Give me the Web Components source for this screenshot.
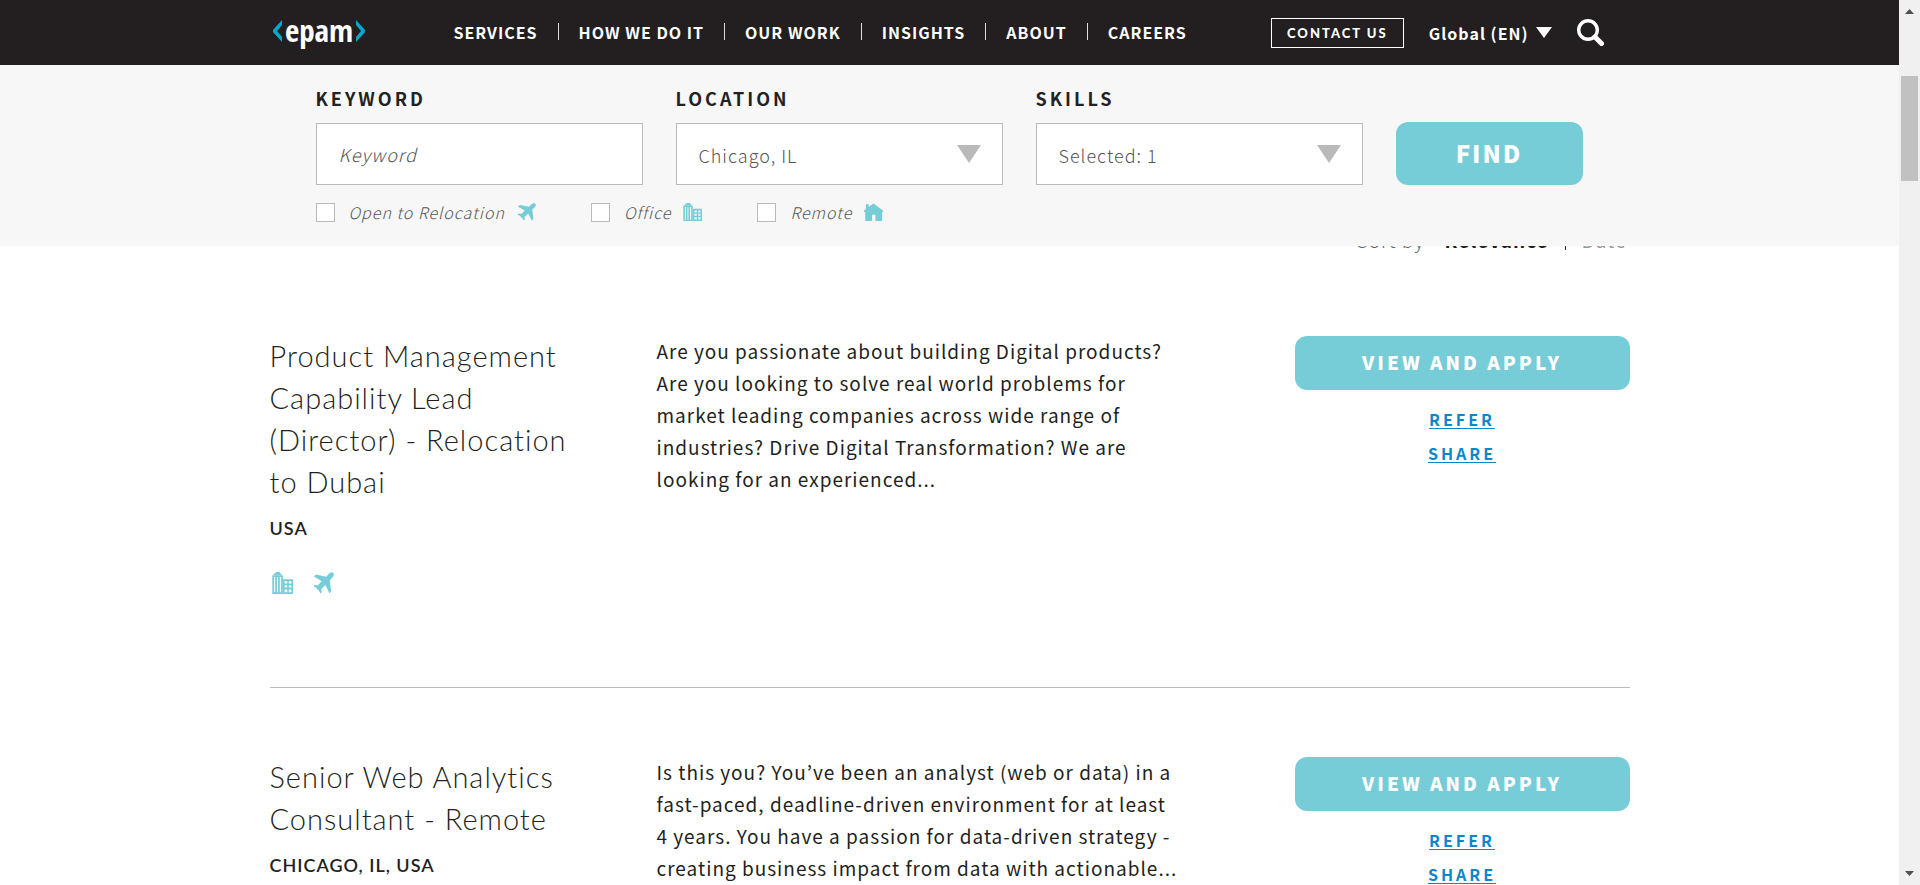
<!DOCTYPE html>
<html lang="en">
<head>
<meta charset="utf-8">
<meta name="viewport" content="width=device-width, initial-scale=1">
<title>EPAM Careers - Job Listings</title>
<style>
  html, body { margin: 0; height: 100%; }
  body {
    --text: "Noto Sans CJK KR", "Noto Sans", sans-serif;
    --display: Lato, "Open Sans", sans-serif;
    --ink: #231f20;
    --teal: #76cdd8;
    --link: #0b86cc;
    --edge: #bbb;
    background: #fff;
    color: #231f20;
    font-family: var(--text);
    overflow: hidden;
  }
</style>
</head>
<body>
<careers-page>
  <site-header slot="header">
    <nav-item href="#services">SERVICES</nav-item>
    <nav-item href="#how">HOW WE DO IT</nav-item>
    <nav-item href="#work">OUR WORK</nav-item>
    <nav-item href="#insights">INSIGHTS</nav-item>
    <nav-item href="#about">ABOUT</nav-item>
    <nav-item href="#careers">CAREERS</nav-item>
  </site-header>
  <job-search slot="search"></job-search>
  <sort-bar></sort-bar>
  <job-card>
    <span slot="title">Product Management Capability Lead (Director) - Relocation to Dubai</span>
    <span slot="place">USA</span>
    <ui-icon slot="modes" name="office" size="large"></ui-icon>
    <ui-icon slot="modes" name="plane" size="large"></ui-icon>
    Are you passionate about building Digital products? Are you looking to solve real world problems for market leading companies across wide range of industries? Drive Digital Transformation? We are looking for an experienced...
  </job-card>
  <job-card>
    <span slot="title">Senior Web Analytics Consultant - Remote</span>
    <span slot="place">CHICAGO, IL, USA</span>
    <ui-icon slot="modes" name="home" size="large"></ui-icon>
    Is this you? You’ve been an analyst (web or data) in a fast-paced, deadline-driven environment for at least 4&nbsp;years. You have a passion for data-driven strategy - creating business impact from data with actionable...
  </job-card>
</careers-page>

<script>
  const define = (name, html, setup) => {
    const template = document.createElement('template');
    template.innerHTML = html;
    customElements.define(name, class extends HTMLElement {
      constructor() {
        super();
        this.attachShadow({ mode: 'open' }).append(template.content.cloneNode(true));
      }
      connectedCallback() { if (setup) setup(this, this.shadowRoot); }
    });
  };

  const icons = {
    plane: '<path d="M19.300.700C18.200-.300 16.700.300 15.700 1.200L12.500 4.300 3.200 2.300.700 3.800 8.200 8.300 4.500 12.200 1.800 11.700.500 12.900 3.800 14.800 4 16.200 5.200 16.300 7.100 19.500 8.300 18.300 7.900 15.500 11.800 11.800 15.700 19.600 17.300 17.200 16 7.600 18.900 4.500C19.900 3.400 20.200 1.600 19.300.700Z"/>',
    office: '<path d="M3.500 0h4v1.300h-4zM1.500 1.300h7.500V3H1.500z"/><path fill-rule="evenodd" d="M.3 3h10v17H.3zM2 4.500V18.500h1V4.500zM4.700 4.500V18.500h1V4.500zM7.400 4.500V18.500h1.200V4.500z"/><path fill-rule="evenodd" d="M10.300 6.500H20V20h-9.700zM12 8.300v2.200h2.500V8.300zM16 8.300v2.200h2.500V8.300zM12 12v2.200h2.500V12zM16 12v2.200h2.500V12zM12 15.800V18.300h2.500V15.800zM16 15.800V18.300h2.500V15.800z"/>',
    home: '<path d="M10 .5 20 8.300V10h-.9V20H12v-7H8.500v7H1.300V10H0V8.300L2 6.700V1.500h3v2.700z"/>'
  };

  define('ui-icon', `
    <style>
      :host { display: block; width: 19px; height: 18px; color: var(--teal); }
      :host([size="large"]) { width: 21px; height: 22px; }
      svg { display: block; width: 100%; height: 100%; fill: currentColor; overflow: visible; }
    </style>
    <svg viewBox="0 0 20 20" preserveAspectRatio="none" aria-hidden="true"></svg>`,
    (host, root) => { root.querySelector('svg').innerHTML = icons[host.getAttribute('name')]; });

  define('careers-page', `
    <style>
      :host { display: grid; grid-template-columns: minmax(0, 1fr) 21px; height: 100vh; }
      .view { display: flex; flex-direction: column; min-height: 0; overflow: hidden; }
      main { flex: 1; min-height: 0; overflow: hidden; }
      .column { max-width: 1360px; margin: 0 auto; }
    </style>
    <div class="view">
      <slot name="header"></slot>
      <slot name="search"></slot>
      <main><div class="column"><slot></slot></div></main>
    </div>
    <page-scroller></page-scroller>`);

  define('page-scroller', `
    <style>
      :host { display: grid; grid-template-rows: 76px 105px 1fr auto; justify-items: center; background: #f0f0f0; }
      svg { display: block; width: 9px; height: 5px; fill: #505050; margin: 9px 0; }
      .thumb { width: 17px; background: #c1c1c1; }
    </style>
    <svg viewBox="0 0 9 5"><path d="M0 5 4.500 0 9 5z"/></svg>
    <div class="thumb"></div>
    <span></span>
    <svg viewBox="0 0 9 5"><path d="M0 0 4.500 5 9 0z"/></svg>`);

  define('nav-item', `
    <style>
      :host { display: flex; align-items: center; }
      :host(:not(:first-child))::before { content: ""; width: 1px; height: 17px; background: #ddd; margin: 0 20px; }
      a { color: #fff; text-decoration: none; font: 700 16px/24px var(--text); letter-spacing: 1px; white-space: nowrap; }
    </style>
    <a><slot></slot></a>`,
    (host, root) => { root.querySelector('a').href = host.getAttribute('href'); });

  define('site-header', `
    <style>
      :host { display: block; flex: none; background: var(--ink); color: #fff; }
      header { display: flex; align-items: center; max-width: 1360px; height: 65px; margin: 0 auto; }
      .logo { display: block; margin-left: 3px; width: 93px; height: 60px; }
      .logo svg { display: block; }
      nav { display: flex; margin-left: 88px; padding-bottom: 2px; }
      .tools { display: flex; align-items: center; margin-left: auto; padding-right: 26px; }
      .contact { box-sizing: border-box; width: 133px; height: 30px; border: 1px solid #fff; color: #fff;
        font: 900 13px/28px var(--display); letter-spacing: 2px; text-align: center; text-decoration: none; white-space: nowrap; }
      button { display: flex; align-items: center; padding: 0; border: 0; background: none; color: #fff; font: 700 16px/24px var(--text); letter-spacing: 1px; white-space: nowrap; }
      .language { margin: 0 25px; gap: 7px; }
      button svg { display: block; }
    </style>
    <header>
      <a class="logo" href="#home" aria-label="epam">
        <svg width="93" height="60" viewBox="0 0 93 60">
          <path d="M9 17v5l-5 6 5 6v5L0 29v-2zM83 17v5l5 6-5 6v5l9-10v-2z" fill="#00a9ce"/>
          <text x="46" y="39" text-anchor="middle" fill="#fff" font-family="'Open Sans Condensed','Roboto Condensed','Liberation Sans Narrow','DejaVu Sans Condensed',sans-serif" font-weight="400" font-size="31">epam</text>
        </svg>
      </a>
      <nav aria-label="Main"><slot></slot></nav>
      <div class="tools">
        <a class="contact" href="#contact">CONTACT US</a>
        <button class="language" type="button">Global (EN)
          <svg width="16" height="11" viewBox="0 0 16 11"><path d="M0 0h16L8 11z" fill="#fff"/></svg>
        </button>
        <button type="button" aria-label="Search">
          <svg width="27" height="27" viewBox="0 0 27 27" fill="none" stroke="#fff"><circle cx="11" cy="11" r="9.300" stroke-width="3.400"/><path d="m18 18 6.500 6.500" stroke-width="5" stroke-linecap="round"/></svg>
        </button>
      </div>
    </header>`);

  define('form-field', `
    <style>
      :host { display: block; }
      label { display: block; margin-bottom: 12px; color: #222; font: 700 18px/26px var(--text); letter-spacing: 3px; }
      .box { display: grid; align-items: center; }
      .box > * { grid-area: 1 / 1; }
      input, select { box-sizing: border-box; width: 100%; height: 62px; margin: 0; padding: 0 22px; appearance: none;
        border: 1px solid var(--edge); border-radius: 0; background: #fff; color: #555; font: 300 18px/26px var(--text); letter-spacing: 1px; }
      select { padding-top: 2px; }
      input::placeholder { color: #555; opacity: 1; font-style: italic; }
      svg { justify-self: end; margin-right: 22px; pointer-events: none; }
    </style>
    <label for="control"></label>
    <div class="box"></div>`,
    (host, root) => {
      root.querySelector('label').textContent = host.getAttribute('label');
      const value = host.getAttribute('value');
      root.querySelector('.box').innerHTML = value
        ? '<select id="control"><option>' + value + '</option></select><svg width="24" height="18" viewBox="0 0 24 18"><path d="M0 0h24L12 18z" fill="#b9b9b9"/></svg>'
        : '<input id="control" type="text" placeholder="' + host.getAttribute('placeholder') + '">';
    });

  define('check-option', `
    <style>
      :host { display: block; }
      label { display: flex; align-items: center; color: #555; font: italic 300 16px/24px var(--text); letter-spacing: 1px; white-space: nowrap; }
      input { box-sizing: border-box; width: 19px; height: 19px; margin: 0 14px 0 0; appearance: none; border: 1px solid var(--edge); background: #fff; }
      ui-icon { margin-left: 12px; }
    </style>
    <label><input type="checkbox"><slot></slot><ui-icon></ui-icon></label>`,
    (host, root) => {
      root.querySelector('ui-icon').shadowRoot.querySelector('svg').innerHTML = icons[host.getAttribute('icon')];
    });

  define('job-search', `
    <style>
      :host { display: block; flex: none; background: #f7f7f7; }
      form { box-sizing: border-box; max-width: 1360px; height: 181px; margin: 0 auto; padding: 20px 47px 0 46px; }
      .fields { display: grid; grid-template-columns: repeat(3, 1fr) 187px; gap: 33px; align-items: end; }
      button { height: 63px; padding: 0 0 2px; border: 0; border-radius: 12px; background: var(--teal); color: #fff; font: 900 24px/36px var(--text); letter-spacing: 2px; }
      .options { display: flex; gap: 55px; margin-top: 15px; }
    </style>
    <form>
      <div class="fields">
        <form-field label="KEYWORD" placeholder="Keyword"></form-field>
        <form-field label="LOCATION" value="Chicago, IL"></form-field>
        <form-field label="SKILLS" value="Selected: 1"></form-field>
        <button type="button">FIND</button>
      </div>
      <div class="options">
        <check-option icon="plane">Open to Relocation</check-option>
        <check-option icon="office">Office</check-option>
        <check-option icon="home">Remote</check-option>
      </div>
    </form>`);

  define('sort-bar', `
    <style>
      :host { display: flex; justify-content: flex-end; height: 30px; margin: -19px 3px -1px 0; font: 400 19px/26px var(--text); letter-spacing: 1px; white-space: nowrap; }
      .by { color: #666; font-weight: 300; margin-right: 20px; }
      b { font-weight: 700; margin-right: 16px; }
      i { width: 1px; height: 23px; background: #222; margin-right: 16px; }
      a { color: #999; text-decoration: none; }
    </style>
    <span class="by">Sort by</span><b>Relevance</b><i></i><a href="#date">Date</a>`);

  define('job-card', `
    <style>
      :host { display: block; }
      :host(:not(:last-child)) article { border-bottom: 1px solid var(--edge); }
      article { box-sizing: border-box; display: grid; grid-template-columns: 320px 530px 1fr; column-gap: 67px; min-height: 421px; padding-top: 69px; }
      :host(:first-of-type) article { min-height: 432px; padding-top: 80px; }
      h2 { margin: -1px 0 0; font: 300 29px/42px var(--display); letter-spacing: 1px; }
      .place { margin: 13px 0 32px; font: 600 18px/24px var(--display); letter-spacing: 1px; }
      .modes { display: flex; gap: 20px; padding-left: 2px; }
      p { margin: -1px 0 0; font: 400 19px/32px var(--text); letter-spacing: 1px; }
      .actions { display: flex; flex-direction: column; align-items: center; justify-self: end; width: 335px; }
      .apply { align-self: stretch; height: 54px; border-radius: 12px; background: var(--teal); color: #fff; font: 900 19px/52px var(--text); letter-spacing: 3px; text-align: center; text-decoration: none; margin-bottom: 12px; }
      .more { color: var(--link); font: 700 16px/34px var(--text); letter-spacing: 3px; text-underline-offset: 2px; text-decoration-thickness: 1px; }
    </style>
    <article>
      <div>
        <h2><slot name="title"></slot></h2>
        <div class="place"><slot name="place"></slot></div>
        <div class="modes"><slot name="modes"></slot></div>
      </div>
      <p><slot></slot></p>
      <div class="actions">
        <a class="apply" href="#apply">VIEW AND APPLY</a>
        <a class="more" href="#refer">REFER</a>
        <a class="more" href="#share">SHARE</a>
      </div>
    </article>`);
</script>
</body>
</html>
